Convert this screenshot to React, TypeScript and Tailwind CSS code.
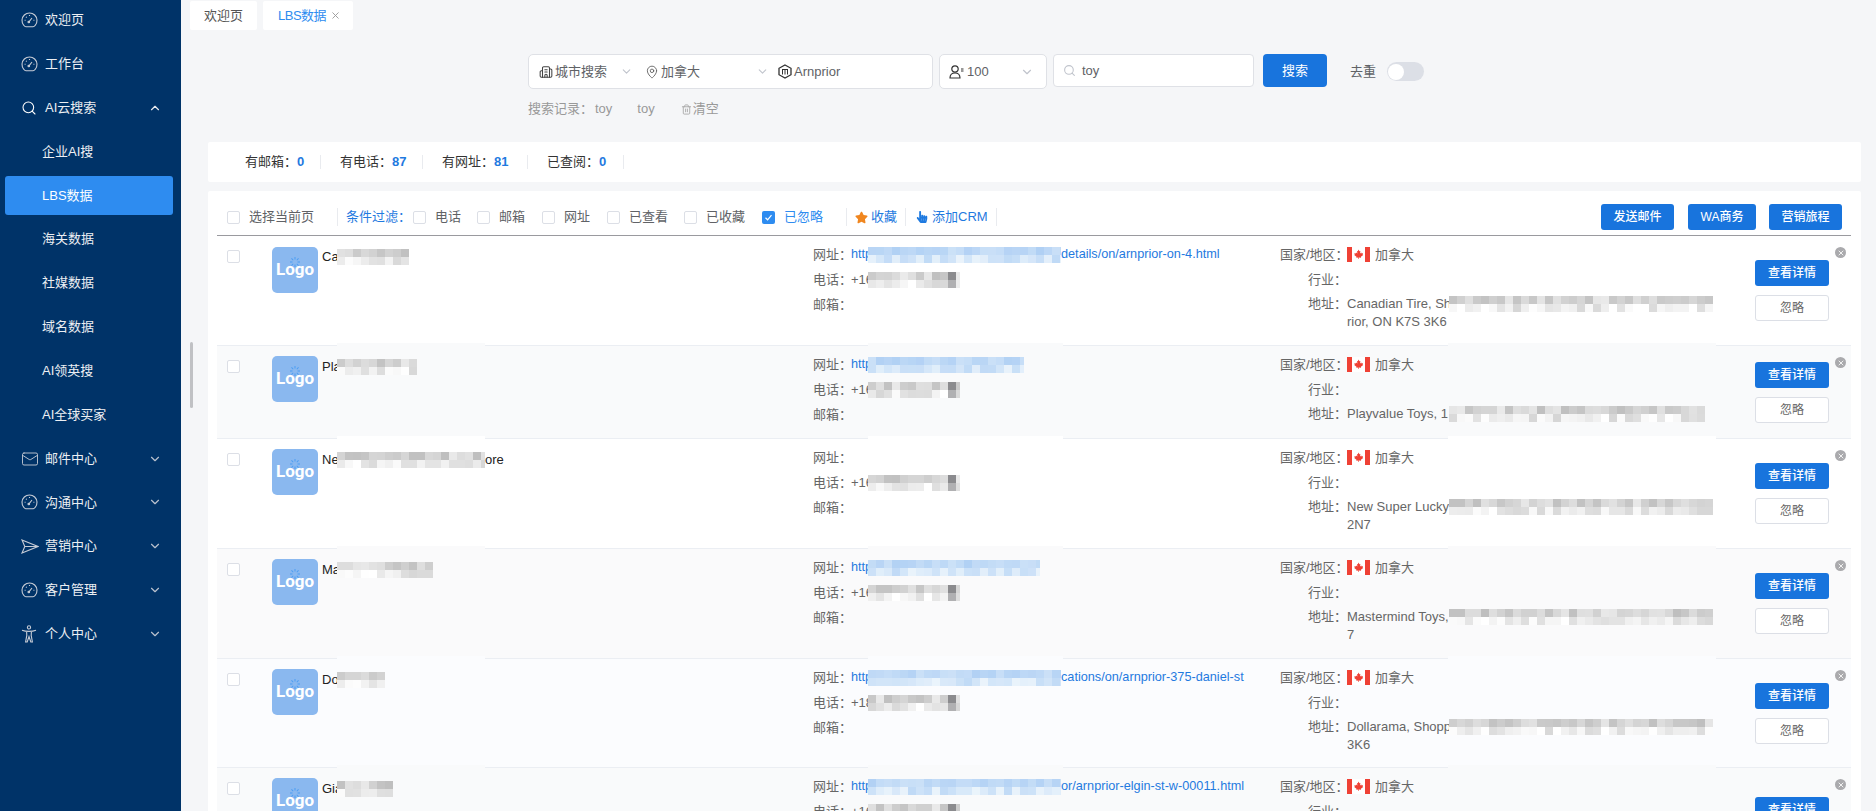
import { Building2, ChevronDown, ChevronUp, Mail, MapPin, Search, Trash2, X } from "lucide-react";
import { FaHandPointer, FaStar } from "react-icons/fa";

const FONT = "font-['Liberation_Sans','Noto_Sans_CJK_SC',sans-serif]";

function GaugeIcon() {
    return (
        <svg width="17" height="16" viewBox="0 0 17 16" fill="none" stroke="#c6ccd6" strokeWidth="1.1">
            <path d="M2.8 13.3a7.5 7.5 0 1 1 11.4 0c-.6.9-1.2 1.5-2.2 1.5H5c-1 0-1.600-.6-2.200-1.500Z" />
            <path d="M8 9.800 11 6M3.600 8.300h1M12.400 8.300h1M8.500 3v1M5 4.800l.7.7" />
            <circle cx="7.8" cy="10" r=".8" fill="#c6ccd6" />
        </svg>
    );
}

function SendIcon() {
    return (
        <svg width="18" height="15" viewBox="0 0 18 15" fill="none" stroke="#c6ccd6" strokeWidth="1.1">
            <path d="M1 1 17 7.500 1 14l2.800-6.500L1 1ZM3.800 7.500H17" />
        </svg>
    );
}

function PersonIcon() {
    return (
        <svg width="16" height="18" viewBox="0 0 16 18" fill="none" stroke="#c6ccd6" strokeWidth="1.1">
            <circle cx="8" cy="2.4" r="1.6" />
            <path d="M1 5.200c2 .8 4 1.200 7 1.200s5-.4 7-1.200M5.600 6.400l.2 4-1.200 6.600h1.600L8 11.500l1.800 5.500h1.600l-1.200-6.600.2-4" />
        </svg>
    );
}

function Spinner() {
    const ticks = [0, 45, 90, 135, 180, 225, 270, 315];
    return (
        <svg width="12" height="12" viewBox="0 0 12 12" className="absolute left-[17px] top-[9px]">
            {ticks.map((a) => (
                <line key={a} x1="6" y1="1" x2="6" y2="3.5" stroke="#4b9df3" strokeWidth="1" transform={`rotate(${a} 6 6)`} />
            ))}
        </svg>
    );
}

function Flag() {
    return (
        <svg width="23" height="15" viewBox="0 0 23 15">
            <rect width="23" height="15" fill="#fff" />
            <rect width="5" height="15" fill="#ef4135" />
            <rect x="18" width="5" height="15" fill="#ef4135" />
            <path
                d="M11.500 2.500l1 1.800.9-.4-.4 2.700 1.300-1.100.3.900 1.400-.3-.4 1.400.6.400-2.300 1.900.2.900-2.100-.3v1.500h-.6v-1.500l-2.100.3.200-.9-2.300-1.900.6-.4-.4-1.400 1.400.3.300-.9 1.300 1.100-.4-2.700.9.400z"
                fill="#ef4135"
            />
        </svg>
    );
}

function Hexagon() {
    return (
        <svg width="14" height="15" viewBox="0 0 14 15" fill="none" stroke="#333" strokeWidth="1.3">
            <path d="M7 1 13 4.300v6.400L7 14 1 10.700V4.300L7 1Z" />
            <path d="M4 5.500h6M4.500 5.500v5M7 5.500v5M9.500 5.500v5" strokeWidth="1" />
        </svg>
    );
}

function UserIcon() {
    return (
        <svg width="15" height="14" viewBox="0 0 15 14" fill="none" stroke="#333" strokeWidth="1.2">
            <circle cx="6" cy="4" r="3.2" />
            <path d="M1 13c0-3 2-5 5-5s5 2 5 5H1Z" />
            <path d="M12 4h2.500M12 6h2.500" />
        </svg>
    );
}

// mosaic stand-in for the blurred parts of the data
function Mosaic({ w, rows = 2, seed, tone = "gray", accent }: { w: number; rows?: number; seed: number; tone?: "gray" | "blue"; accent?: boolean }) {
    const cols = Math.ceil(w / 8);
    const cells = [];
    for (let r = 0; r < rows; r++) {
        for (let c = 0; c < cols; c++) {
            const n = Math.abs(Math.sin(seed * 12.9 + c * 78.2 + r * 37.7) * 43758.5) % 1;
            let color: string;
            if (tone === "blue") {
                const k = r === 0 ? 0.45 * n : 0.25 + 0.7 * n;
                color = `rgb(${Math.round(176 + 62 * k)},${Math.round(208 + 38 * k)},${Math.round(244 + 8 * k)})`;
            } else {
                const v = Math.round((r === rows - 1 ? 214 : 190) + 44 * n);
                color = `rgb(${v},${v},${v})`;
            }
            if (accent && c === cols - 2) color = r === 0 ? "#8b8b8e" : "#b0b0b2";
            cells.push(<div key={`${r}-${c}`} className="h-[8px]" style={{ backgroundColor: color }} />);
        }
    }
    return (
        <div className="relative grid shrink-0 overflow-hidden" style={{ width: w, gridTemplateColumns: `repeat(${cols}, 8px)` }}>
            {cells}
        </div>
    );
}

function Box() {
    return <span className="block h-[13px] w-[13px] shrink-0 rounded-[2px] border border-[#dcdfe6] bg-white" />;
}

function Divider() {
    return <span className="block h-[18px] w-px shrink-0 bg-[#e9ebef]" />;
}

const menu = [
    { label: "欢迎页", icon: <GaugeIcon /> },
    { label: "工作台", icon: <GaugeIcon /> },
    { label: "AI云搜索", icon: <Search size={16} color="#fff" strokeWidth={1.6} />, open: true },
    { label: "企业AI搜", sub: true },
    { label: "LBS数据", sub: true, active: true },
    { label: "海关数据", sub: true },
    { label: "社媒数据", sub: true },
    { label: "域名数据", sub: true },
    { label: "AI领英搜", sub: true },
    { label: "AI全球买家", sub: true },
    { label: "邮件中心", icon: <Mail size={18} color="#c6ccd6" strokeWidth={1.2} />, more: true },
    { label: "沟通中心", icon: <GaugeIcon />, more: true },
    { label: "营销中心", icon: <SendIcon />, more: true },
    { label: "客户管理", icon: <GaugeIcon />, more: true },
    { label: "个人中心", icon: <PersonIcon />, more: true },
];

function Sidebar() {
    return (
        <aside className="h-[811px] w-[181px] shrink-0 overflow-hidden bg-[#003368] text-[13px] text-[#eceff3]">
            <div className="-mt-[2px]">
                {menu.map((m) =>
                    m.sub ? (
                        <div key={m.label} className="flex h-[43.86px] items-center px-[5px]">
                            <div
                                className={
                                    m.active
                                        ? "flex h-[39px] w-[168px] items-center rounded-[3px] bg-[#2e8cf0] pl-[37px] text-white"
                                        : "flex h-[39px] w-[168px] items-center pl-[37px]"
                                }
                            >
                                {m.label}
                            </div>
                        </div>
                    ) : (
                        <div key={m.label} className="flex h-[43.86px] items-center pl-[21px] pr-[19px]">
                            <span className="flex w-[24px] shrink-0 items-center">{m.icon}</span>
                            <span>{m.label}</span>
                            {m.open && <ChevronUp size={14} color="#e8ebef" className="ml-auto" />}
                            {m.more && <ChevronDown size={14} color="#b9c2ce" className="ml-auto" />}
                        </div>
                    ),
                )}
            </div>
        </aside>
    );
}

function SearchBar() {
    return (
        <div className="ml-[320px] mt-[24px]">
            <div className="flex items-start">
                <div className="flex h-[35px] w-[405px] items-center rounded-[5px] border border-[#dfe1e6] bg-white text-[13px] text-[#606266]">
                    <div className="flex w-[116px] items-center pl-[10px]">
                        <Building2 size={14} color="#444" strokeWidth={1.8} />
                        <span className="ml-[2px]">城市搜索</span>
                        <ChevronDown size={13} color="#c0c4cc" className="ml-auto mr-[12px]" />
                    </div>
                    <div className="flex w-[133px] items-center">
                        <MapPin size={14} color="#555" strokeWidth={1.4} />
                        <span className="ml-[2px]">加拿大</span>
                        <ChevronDown size={13} color="#c0c4cc" className="ml-auto mr-[9px]" />
                    </div>
                    <div className="flex items-center">
                        <Hexagon />
                        <span className="ml-[2px]">Arnprior</span>
                    </div>
                </div>
                <div className="ml-[6px] flex h-[35px] w-[108px] items-center rounded-[5px] border border-[#dfe1e6] bg-white pl-[9px] pr-[12px] text-[13px] text-[#606266]">
                    <UserIcon />
                    <span className="ml-[3px]">100</span>
                    <ChevronDown size={14} color="#c0c4cc" className="ml-auto" />
                </div>
                <div className="ml-[6px] flex h-[33px] w-[201px] items-center rounded-[4px] border border-[#dfe1e6] bg-white pl-[9px] text-[13px] text-[#606266]">
                    <Search size={13} color="#c0c4cc" />
                    <span className="ml-[6px]">toy</span>
                </div>
                <button className="ml-[9px] h-[33px] w-[64px] rounded-[4px] bg-[#1874dd] text-[13px] text-white">搜索</button>
                <div className="ml-[23px] flex h-[35px] items-center text-[13px] text-[#606266]">
                    <span>去重</span>
                    <span className="ml-[11px] flex h-[19px] w-[37px] items-center rounded-full bg-[#dcdfe6] pl-[1px]">
                        <span className="block h-[16px] w-[16px] rounded-full bg-white" />
                    </span>
                </div>
            </div>
            <div className="mt-[11px] flex h-[18px] items-center text-[13px] text-[#999]">
                <span className="w-[67px]">搜索记录：</span>
                <span>toy</span>
                <span className="ml-[25px]">toy</span>
                <Trash2 size={11} color="#aaa" className="ml-[26px]" />
                <span className="ml-[1px]">清空</span>
            </div>
        </div>
    );
}

const stats = [
    { label: "有邮箱：", value: "0", cls: "w-[95px]" },
    { label: "有电话：", value: "87", cls: "w-[102px]" },
    { label: "有网址：", value: "81", cls: "w-[105px]" },
    { label: "已查阅：", value: "0", cls: "w-[96px]" },
];

function StatBar() {
    return (
        <div className="mt-[24px] flex h-[40px] items-center rounded-[2px] bg-white pl-[37px] text-[13px] text-[#333]">
            {stats.map((s) => (
                <div key={s.label} className={`flex items-center ${s.cls}`}>
                    <span>{s.label}</span>
                    <span className="font-bold text-[#1f7ae0]">{s.value}</span>
                    <span className="ml-auto mr-[19px] block h-[14px] w-px bg-[#e9ebef]" />
                </div>
            ))}
        </div>
    );
}

const filters = [
    { label: "电话", cls: "w-[64px]" },
    { label: "邮箱", cls: "w-[65px]" },
    { label: "网址", cls: "w-[65px]" },
    { label: "已查看", cls: "w-[77px]" },
    { label: "已收藏", cls: "w-[78px]" },
];

function Toolbar() {
    return (
        <div className="flex h-[45px] items-center border-b border-[#9a9a9f] pl-[10px] pr-[9px] pt-[8px] text-[13px] text-[#606266]">
            <Box />
            <span className="ml-[9px] w-[65px] whitespace-nowrap">选择当前页</span>
            <span className="ml-[23px]"><Divider /></span>
            <span className="ml-[8px] w-[67px] whitespace-nowrap text-[#1f7ae0]">条件过滤：</span>
            {filters.map((f) => (
                <div key={f.label} className={`flex items-center gap-[9px] ${f.cls}`}>
                    <Box />
                    <span>{f.label}</span>
                </div>
            ))}
            <div className="flex w-[84px] items-center gap-[9px]">
                <span className="flex h-[13px] w-[13px] items-center justify-center rounded-[2px] bg-[#2e8cf0]">
                    <svg width="9" height="9" viewBox="0 0 9 9" fill="none" stroke="#fff" strokeWidth="1.2">
                        <path d="M1.500 4.800 3.600 6.800 7.500 2.200" />
                    </svg>
                </span>
                <span className="text-[#2e8cf0]">已忽略</span>
            </div>
            <Divider />
            <FaStar size={13} color="#f0861f" className="ml-[8px]" />
            <span className="ml-[3px] text-[#1f7ae0]">收藏</span>
            <span className="ml-[8px]"><Divider /></span>
            <FaHandPointer size={12} color="#1f7ae0" className="ml-[10px]" />
            <span className="ml-[4px] text-[#1f7ae0]">添加CRM</span>
            <span className="ml-[8px]"><Divider /></span>
            <div className="ml-auto flex text-[12px] text-white">
                <button className="h-[26px] w-[73px] rounded-[3px] bg-[#1874dd] font-medium">发送邮件</button>
                <button className="ml-[14px] h-[26px] w-[68px] rounded-[3px] bg-[#1874dd] font-medium">WA商务</button>
                <button className="ml-[13px] h-[26px] w-[73px] rounded-[3px] bg-[#1874dd] font-medium">营销旅程</button>
            </div>
        </div>
    );
}

type Row = {
    h: string;
    bg: string;
    name: string;
    nameW: number;
    nameEnd?: string;
    url?: number;
    urlEnd?: string;
    phone: string;
    addr: string;
    addrW: number;
    addr2?: string;
};

const rows: Row[] = [
    { h: "h-[110px]", bg: "bg-white", name: "Ca", nameW: 72, url: 193, urlEnd: "details/on/arnprior-on-4.html", phone: "+16", addr: "Canadian Tire, Sh", addrW: 264, addr2: "rior, ON K7S 3K6" },
    { h: "h-[93px]", bg: "bg-[#f9fafb]", name: "Pla", nameW: 80, url: 156, phone: "+16", addr: "Playvalue Toys, 1", addrW: 256 },
    { h: "h-[110px]", bg: "bg-white", name: "Ne", nameW: 148, nameEnd: "ore", phone: "+16", addr: "New Super Lucky", addrW: 264, addr2: "2N7" },
    { h: "h-[110px]", bg: "bg-[#fafafb]", name: "Ma", nameW: 96, url: 172, phone: "+16", addr: "Mastermind Toys,", addrW: 264, addr2: "7" },
    { h: "h-[109px]", bg: "bg-[#fbfcfe]", name: "Do", nameW: 48, url: 193, urlEnd: "cations/on/arnprior-375-daniel-st", phone: "+18", addr: "Dollarama, Shopp", addrW: 264, addr2: "3K6" },
    { h: "h-[120px]", bg: "bg-[#f9fafb]", name: "Gia", nameW: 56, url: 193, urlEnd: "or/arnprior-elgin-st-w-00011.html", phone: "+16", addr: "", addrW: 264 },
];

function ResultRow({ row, index }: { row: Row; index: number }) {
    return (
        <div className={`relative flex border-b border-[#ebeef3] text-[13px] text-[#666] ${row.h} ${row.bg}`}>
            {index > 0 && (
                <>
                    <span className={`absolute -top-[3px] left-[120px] h-[4px] w-[148px] ${row.bg}`} />
                    <span className={`absolute -top-[3px] left-[651px] h-[4px] w-[195px] ${row.bg}`} />
                    <span className={`absolute -top-[3px] left-[1231px] h-[4px] w-[268px] ${row.bg}`} />
                </>
            )}
            <div className="w-[55px] shrink-0 pl-[10px] pt-[14px]">
                <Box />
            </div>
            <div className={index === 0 ? "w-[46px] shrink-0 pt-[11px]" : "w-[46px] shrink-0 pt-[10px]"}>
                <div className="relative flex h-[46px] w-[46px] items-center justify-center rounded-[5px] bg-[#8ab8ef] font-['Roboto',sans-serif] text-[17px] font-bold text-white">
                    Logo
                    <Spinner />
                </div>
            </div>
            <div className="ml-[4px] w-[491px] shrink-0 pt-[10px]">
                <div className="flex h-[22px] items-center text-[#222]">
                    <span className="w-[15px] whitespace-nowrap">{row.name}</span>
                    <Mosaic w={row.nameW} seed={index + 1} />
                    {row.nameEnd && <span>{row.nameEnd}</span>}
                </div>
            </div>
            <div className="w-[467px] shrink-0 pt-[6px]">
                <div className="flex h-[25px] items-center">
                    <span className="w-[38px] shrink-0 whitespace-nowrap">网址：</span>
                    {row.url && (
                        <>
                            <span className="w-[17px] whitespace-nowrap text-[12.7px] text-[#1f7ae0]">http</span>
                            <Mosaic w={row.url} seed={index + 11} tone="blue" />
                            {row.urlEnd && <span className="whitespace-nowrap text-[12.7px] text-[#1f7ae0]">{row.urlEnd}</span>}
                        </>
                    )}
                </div>
                <div className="flex h-[25px] items-center">
                    <span className="w-[38px] shrink-0 whitespace-nowrap">电话：</span>
                    <span className="w-[17px] whitespace-nowrap">{row.phone}</span>
                    <Mosaic w={92} seed={index + 21} accent />
                </div>
                <div className="flex h-[25px] items-center">
                    <span className="w-[38px] shrink-0 whitespace-nowrap">邮箱：</span>
                </div>
            </div>
            <div className="w-[475px] shrink-0 pt-[6px]">
                <div className="flex h-[25px] items-center">
                    <span className="w-[67px] shrink-0 whitespace-nowrap text-right">国家/地区：</span>
                    <Flag />
                    <span className="ml-[5px]">加拿大</span>
                </div>
                <div className="flex h-[25px] items-center">
                    <span className="w-[67px] shrink-0 text-right">行业：</span>
                </div>
                <div className="mt-[3px] flex h-[18px] items-center">
                    <span className="w-[67px] shrink-0 text-right">地址：</span>
                    <span className="w-[102px] shrink-0 whitespace-nowrap">{row.addr}</span>
                    <Mosaic w={row.addrW} seed={index + 31} />
                </div>
                {row.addr2 && <div className="ml-[67px] h-[18px] leading-[18px]">{row.addr2}</div>}
            </div>
            <div className="flex w-[74px] shrink-0 flex-col justify-center gap-[9px] text-[12px]">
                <button className="h-[26px] rounded-[3px] bg-[#1874dd] font-medium text-white">查看详情</button>
                <button className="h-[26px] rounded-[3px] border border-[#dcdfe6] bg-white text-[#666]">忽略</button>
            </div>
            <span className="absolute right-[5px] top-[11px] flex h-[11px] w-[11px] items-center justify-center rounded-full bg-[#aaaaad]">
                <X size={8} color="#fff" strokeWidth={2.5} />
            </span>
        </div>
    );
}

export default function App() {
    return (
        <div className={`flex h-[811px] overflow-hidden ${FONT}`}>
            <Sidebar />
            <main className="relative h-[811px] min-w-0 flex-1 overflow-hidden bg-[#f5f6f8]">
                <span className="absolute left-[9px] top-[342px] h-[66px] w-[3px] rounded-full bg-[#c0c1c4]" />
                <div className="flex gap-[6px] pl-[9px] pt-[1px] text-[13px]">
                    <div className="flex h-[29px] w-[67px] items-center justify-center rounded-[2px] bg-white text-[#555]">欢迎页</div>
                    <div className="flex h-[29px] w-[90px] items-center gap-[4px] rounded-[2px] bg-white pl-[15px] tracking-[-0.5px] text-[#2e8cf0]">
                        LBS数据
                        <X size={11} color="#999" />
                    </div>
                </div>
                <div className="pl-[27px] pr-[15px]">
                    <SearchBar />
                    <StatBar />
                    <div className="mt-[9px] rounded-t-[2px] bg-white pl-[9px] pr-[10px]">
                        <Toolbar />
                        {rows.map((r, i) => (
                            <ResultRow key={r.name} row={r} index={i} />
                        ))}
                    </div>
                </div>
            </main>
        </div>
    );
}
